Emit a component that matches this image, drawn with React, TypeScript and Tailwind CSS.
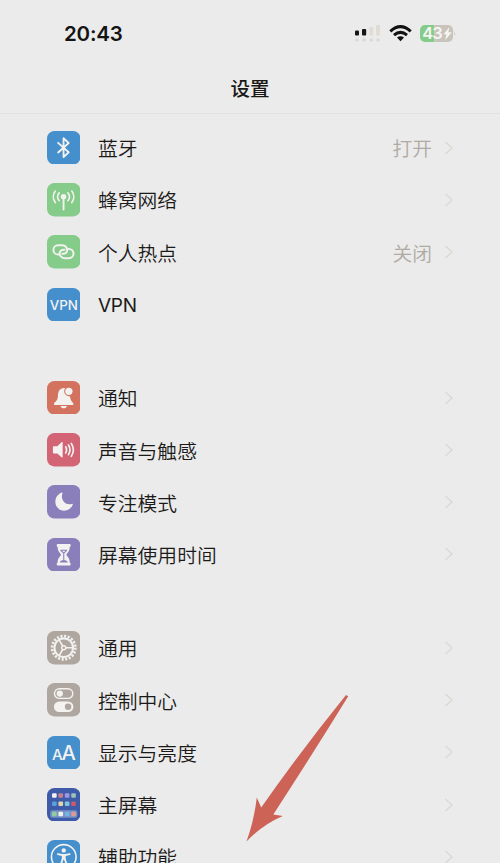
import React from 'react';

interface Row {
  label: string;
  value?: string;
  color: string;
  icon: React.ReactNode;
  noArrow?: boolean;
}

const line = {
  fill: 'none',
  stroke: '#f3f2f0',
  strokeLinecap: 'round' as const,
  strokeLinejoin: 'round' as const,
};

const Bluetooth = () => (
  <path {...line} strokeWidth="1.9" d="M11.3 12 22 21.6 16.8 26.4V7.4L22 12.2 11.3 21.8" />
);

const Cellular = () => (
  <g {...line} strokeWidth="1.7">
    <path strokeWidth="1.9" d="M16.8 14V27" />
    <path d="M12.4 10A5.6 5.6 0 0 0 12.4 18M21.2 10A5.6 5.6 0 0 1 21.2 18" />
    <path d="M8.4 8.2A9.6 9.6 0 0 0 8.4 19.8M25.2 8.2A9.6 9.6 0 0 1 25.2 19.8" />
    <circle cx="16.8" cy="14" r="2.8" fill="#f3f2f0" stroke="none" />
  </g>
);

const Hotspot = () => (
  <g {...line} strokeWidth="2">
    <path d="M11.8 19.8H11.2A4.6 4.6 0 0 1 11.2 10.4H15.9A4.8 4.8 0 0 1 20.2 16.8Q19.2 19 16.4 19H15.6" />
    <path d="M21.6 14.1H22.2A4.6 4.6 0 0 1 22.2 23.5H17.5A4.8 4.8 0 0 1 13.2 17.1Q14.2 14.9 17 14.9H17.8" />
  </g>
);

const Vpn = () => (
  <text x="2.8" y="22" fontSize="14" fontWeight="500" textLength="28.6" lengthAdjust="spacingAndGlyphs" fill="#f3f2f0" className="font-[Inter]">VPN</text>
);

const Bell = () => (
  <g fill="#f3f2f0">
    <path d="M18.4 7.2C13 6.6 11.2 10.6 11.1 15 11 19.2 9.2 20.5 7.4 22.4 6.6 23.4 7 24.4 8.1 24.4H25.8C26.9 24.4 27.3 23.4 26.5 22.4 24.7 20.6 23.6 19.3 23.4 15.6 18.4 16 16 11 18.4 7.2Z" />
    <path d="M13.7 25.3H20.2C19.7 28.4 14.3 28.4 13.7 25.3Z" />
    <circle cx="22.2" cy="10.5" r="3.7" />
  </g>
);

const Sound = () => (
  <g>
    <path fill="#f3f2f0" d="M7 13.4H10.5L14.7 9.4Q15.9 8.8 15.9 10V24Q15.9 25.2 14.7 24.6L10.5 20.8H7Q6 20.8 6 19.8V14.4Q6 13.4 7 13.4Z" />
    <path {...line} strokeWidth="1.7" d="M19 14Q20.8 17 19 20.2M21.8 12.2Q24.8 17 21.8 22M24.7 10.6Q28.8 17 24.7 23.6" />
  </g>
);

const Moon = () => (
  <path fill="#f3f2f0" d="M14.8 7.6C15.4 7.3 16 7.8 15.7 8.5 13.4 15.1 18.6 20.9 25.2 19.2 26.1 19 26.5 19.5 26 20.3 22.8 27.2 13.8 28.2 10 22.2 6.8 17 8.8 10.3 14.8 7.6Z" />
);

const Hourglass = () => (
  <g>
    <path fill="#f3f2f0" d="M10.8 6.2H23.1Q24 6.2 24 7.1V8Q24 8.9 23.1 8.9C23.1 13 21.2 14.7 19.5 17 21.2 19.3 23.1 21 23.1 25.1Q24 25.1 24 26V26.9Q24 27.8 23.1 27.8H10.8Q9.9 27.8 9.9 26.9V26Q9.9 25.1 10.8 25.1C10.8 21 12.7 19.3 14.4 17 12.7 14.7 10.8 13 10.8 8.9Q9.9 8.9 9.9 8V7.1Q9.9 6.2 10.8 6.2Z" />
    <path fill="none" stroke="#8a7fba" strokeWidth="1.1" strokeLinecap="round" strokeLinejoin="round" d="M14 12.5H20L17 15.4ZM17 15V23.3M13.6 24.2Q17 21.8 20.4 24.2Z" />
  </g>
);

const Gear = () => (
  <g fill="none" stroke="#f3f2f0">
    <circle cx="17" cy="17" r="9.5" strokeWidth="2.1" />
    <circle cx="17" cy="17" r="11.8" strokeWidth="2.7" strokeDasharray="2.1 1.607" />
    <circle cx="17" cy="17" r="2" strokeWidth="1.5" />
    <path strokeWidth="1.7" d="M19.2 17H26M15.9 15.1 12.4 9.2M15.9 18.9 12.4 24.8" />
  </g>
);

const Switches = () => (
  <g>
    <rect x="7.6" y="5.8" width="18.6" height="9.8" rx="4.9" fill="none" stroke="#f3f2f0" strokeWidth="1.4" />
    <circle cx="13" cy="10.7" r="3.2" fill="#f3f2f0" />
    <rect x="7" y="18.8" width="19.8" height="10.6" rx="5.3" fill="#f3f2f0" />
    <circle cx="21.4" cy="24.1" r="3.3" fill="#afa79f" />
  </g>
);

const TextSize = () => (
  <g fill="#f3f2f0" className="font-[Inter]" fontWeight="500">
    <text x="5" y="24.3" fontSize="15.2">A</text>
    <text x="14.8" y="24.3" fontSize="20.5">A</text>
  </g>
);

const dots = [
  '#f5f1ee', '#c5808b', '#a594e6', '#9ac4b8',
  '#5aa0df', '#e2d5a9', '#80c4dc', '#c95b6c',
  '#8fce9a', '#f0f1ec', '#72b5e5', '#dd9a93',
];

const HomeGrid = () => (
  <g>
    <rect x="3.3" y="22.6" width="27.4" height="7.6" rx="2.2" fill="#7791c5" />
    {dots.map((c, i) => (
      <rect key={i} x={5.1 + (i % 4) * 6.5} y={[5.3, 13.6, 24][Math.floor(i / 4)]} width="4.7" height="4.7" rx="1.1" fill={c} />
    ))}
  </g>
);

const Accessibility = () => (
  <g>
    <circle cx="17" cy="17.2" r="12.5" fill="none" stroke="#f3f2f0" strokeWidth="1.6" />
    <circle cx="17" cy="10.6" r="2.2" fill="#f3f2f0" />
    <path {...line} strokeWidth="1.9" d="M11 14.4 15.4 15.2H18.6L23 14.4M16 15.5V19L14 25M18 15.5V19L20 25M17 15.5V19" />
  </g>
);

const groups: Row[][] = [
  [
    { label: '蓝牙', value: '打开', color: '#458fcd', icon: <Bluetooth /> },
    { label: '蜂窝网络', color: '#85cb89', icon: <Cellular /> },
    { label: '个人热点', value: '关闭', color: '#85cb89', icon: <Hotspot /> },
    { label: 'VPN', color: '#458fcd', icon: <Vpn />, noArrow: true },
  ],
  [
    { label: '通知', color: '#d3735f', icon: <Bell /> },
    { label: '声音与触感', color: '#d26476', icon: <Sound /> },
    { label: '专注模式', color: '#8a7fba', icon: <Moon /> },
    { label: '屏幕使用时间', color: '#8a7fba', icon: <Hourglass /> },
  ],
  [
    { label: '通用', color: '#afa79f', icon: <Gear /> },
    { label: '控制中心', color: '#afa79f', icon: <Switches /> },
    { label: '显示与亮度', color: '#458fcd', icon: <TextSize /> },
    { label: '主屏幕', color: '#3d5ba8', icon: <HomeGrid /> },
    { label: '辅助功能', color: '#458fcd', icon: <Accessibility /> },
  ],
];

function SettingRow({ row }: { row: Row }) {
  const labelStyle = row.label === 'VPN'
    ? 'pt-[3px] font-[Inter] text-[19px] font-normal tracking-[-0.3px]'
    : 'pt-px text-[19.8px] font-[350]';

  return (
    <div className="flex h-[52.25px] items-center pl-[46.5px] pr-[46px]">
      <svg viewBox="0 0 34 34" className="h-[33.5px] w-[33.5px] shrink-0">
        <rect width="34" height="34" rx="7.5" fill={row.color} />
        {row.icon}
      </svg>
      <span className={`ml-[18px] flex-1 whitespace-nowrap leading-none text-[#1b1a18] ${labelStyle}`}>{row.label}</span>
      {row.value && <span className="mr-[12px] pt-px text-[19.8px] leading-none font-[350] text-[#b0aaa3]">{row.value}</span>}
      {!row.noArrow && (
        <svg viewBox="0 0 10 14" className="h-[14px] w-[10px]" fill="none" stroke="#dbd9d4" strokeWidth="1.4">
          <path d="M1.5 1 8 7 1.5 13" />
        </svg>
      )}
    </div>
  );
}

function StatusBar() {
  return (
    <div className="flex h-[66px] items-center pl-[64px] pr-[44px]">
      <span className="flex-1 pt-[2px] font-[Inter] text-[20.5px] leading-none font-semibold tracking-[-0.2px] text-[#141414]">20:43</span>
      <svg viewBox="0 0 102 20" className="h-[20px] w-[102px]">
        <rect x="1" y="7.5" width="4" height="5" rx="1" fill="#161616" />
        <rect x="8" y="6" width="4.2" height="6.5" rx="1" fill="#161616" />
        <rect x="15.3" y="4" width="4" height="8.5" rx="1" fill="#e0dcd5" />
        <rect x="22" y="2" width="4" height="10.5" rx="1" fill="#e0dcd5" />
        {[3, 10, 17.3, 24].map((x) => (
          <circle key={x} cx={x} cy="17" r="1.8" fill="#ddd9d2" />
        ))}
        <g fill="none" stroke="#111" strokeWidth="3">
          <path d="M36.3 8.3Q46.5-1 56.7 8.3" />
          <path d="M40 12.2Q46.5 6.6 53 12.2" />
        </g>
        <path d="M43 14.6Q46.5 12 50 14.6L46.5 18.2Z" fill="#111" />
        <path d="M71 2H80.5V19H71A5 5 0 0 1 66 14V7A5 5 0 0 1 71 2Z" fill="#85cb89" />
        <path d="M80.5 2H94A5 5 0 0 1 99 7V14A5 5 0 0 1 94 19H80.5Z" fill="#c9c4bb" />
        <path d="M100.2 8.5Q102 10.5 100.2 12.5Z" fill="#c9c4bb" />
        <text x="68.3" y="16.4" fontSize="16.5" fontWeight="600" textLength="20.5" fill="#f5f5f3" className="font-[Inter]">43</text>
        <path d="M95.5 4 89.5 11.3H92.3L91.3 17 97.8 9.3H94.3Z" fill="#f5f5f3" />
      </svg>
    </div>
  );
}

export default function App() {
  return (
    <div className="relative h-[863px] w-[500px] overflow-hidden bg-[#ebebeb] font-['Noto_Sans_CJK_SC',sans-serif]">
      <StatusBar />
      <div className="flex h-[48px] items-center justify-center border-b border-[#e1e1e0] pb-[4px]">
        <h1 className="text-[19.5px] leading-none font-medium text-[#191816]">设置</h1>
      </div>
      <div className="flex flex-col gap-[41.2px] pt-[7.4px]">
        {groups.map((group, i) => (
          <div key={i}>
            {group.map((row) => (
              <SettingRow key={row.label} row={row} />
            ))}
          </div>
        ))}
      </div>
      {/* pointer arrow over the list */}
      <svg viewBox="0 0 104 148" className="absolute top-[694px] left-[245px] h-[148px] w-[104px]">
        <path d="M1.5 147.5Q9 127 11.8 103.5L16.2 113.5Q55 58 101 1L103.2 2.2Q67 61 28.3 120.5L37.8 122Q17 131 1.5 147.5Z" fill="#cd6257" />
      </svg>
    </div>
  );
}
